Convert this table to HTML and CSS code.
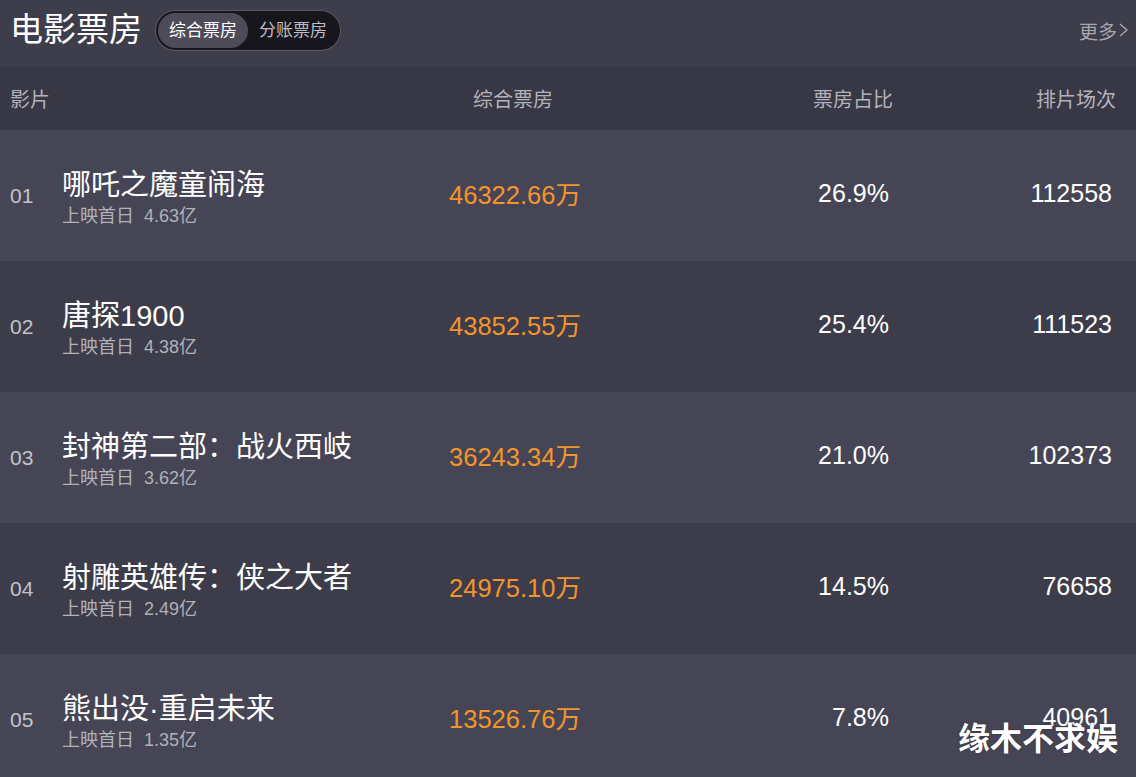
FILE: index.html
```html
<!DOCTYPE html>
<html lang="zh-CN">
<head>
    <meta charset="UTF-8">
    <meta name="viewport" content="width=device-width, initial-scale=1.0">
    <title>电影票房</title>
    <link rel="stylesheet" href="styles.css">
</head>
<body>
    <div class="board">
        <div class="topbar">
            <h1 class="title">电影票房</h1>
            <div class="tabs">
                <span class="tab active">综合票房</span>
                <span class="tab">分账票房</span>
            </div>
            <a class="more" href="#">更多<svg width="11" height="16" viewBox="0 0 11 16"><polyline points="2,2 9,8 2,14" fill="none" stroke="#a9a8b0" stroke-width="1.3"/></svg></a>
        </div>

        <div class="row head">
            <div class="c-film">影片</div>
            <div class="c-box">综合票房</div>
            <div class="c-rate">票房占比</div>
            <div class="c-show">排片场次</div>
        </div>

        <div class="row light">
            <div class="c-film">
                <span class="num">01</span>
                <div class="info">
                    <div class="name">哪吒之魔童闹海</div>
                    <div class="first">上映首日&nbsp;&nbsp;4.63亿</div>
                </div>
            </div>
            <div class="c-box money">46322.66万</div>
            <div class="c-rate val">26.9%</div>
            <div class="c-show val">112558</div>
        </div>

        <div class="row dark">
            <div class="c-film">
                <span class="num">02</span>
                <div class="info">
                    <div class="name">唐探1900</div>
                    <div class="first">上映首日&nbsp;&nbsp;4.38亿</div>
                </div>
            </div>
            <div class="c-box money">43852.55万</div>
            <div class="c-rate val">25.4%</div>
            <div class="c-show val">111523</div>
        </div>

        <div class="row light">
            <div class="c-film">
                <span class="num">03</span>
                <div class="info">
                    <div class="name">封神第二部：战火西岐</div>
                    <div class="first">上映首日&nbsp;&nbsp;3.62亿</div>
                </div>
            </div>
            <div class="c-box money">36243.34万</div>
            <div class="c-rate val">21.0%</div>
            <div class="c-show val">102373</div>
        </div>

        <div class="row dark">
            <div class="c-film">
                <span class="num">04</span>
                <div class="info">
                    <div class="name">射雕英雄传：侠之大者</div>
                    <div class="first">上映首日&nbsp;&nbsp;2.49亿</div>
                </div>
            </div>
            <div class="c-box money">24975.10万</div>
            <div class="c-rate val">14.5%</div>
            <div class="c-show val">76658</div>
        </div>

        <div class="row light">
            <div class="c-film">
                <span class="num">05</span>
                <div class="info">
                    <div class="name">熊出没·重启未来</div>
                    <div class="first">上映首日&nbsp;&nbsp;1.35亿</div>
                </div>
            </div>
            <div class="c-box money">13526.76万</div>
            <div class="c-rate val">7.8%</div>
            <div class="c-show val">40961</div>
        </div>

        <div class="watermark">缘木不求娱</div>
    </div>
</body>
</html>
```

FILE: styles.css
```css
html, body {
    margin: 0;
    padding: 0;
    background-color: #454453;
}

body {
    font-family: "Liberation Sans", "Noto Sans CJK SC", sans-serif;
    width: 1136px;
    height: 777px;
    overflow: hidden;
}

.board {
    position: relative;
}

.topbar {
    display: flex;
    align-items: center;
    height: 60px;
    padding: 0 7px 7px 10px;
    background-color: #3e3d4c;
}

.title {
    margin: 0;
    font-size: 33px;
    font-weight: normal;
    line-height: 40px;
    color: #ffffff;
}

.tabs {
    display: flex;
    margin-left: 14px;
    padding: 2px;
    border-radius: 20px;
    background-color: #17161c;
    box-shadow: 0 0 0 1px #57566a;
}

.tab {
    padding: 0 11px;
    height: 35px;
    line-height: 35px;
    border-radius: 18px;
    font-size: 17px;
    color: #bdbcc4;
}

.tab.active {
    background-color: #4d4b58;
    color: #ffffff;
}

.more {
    margin-left: auto;
    display: flex;
    align-items: center;
    gap: 1px;
    font-size: 19px;
    color: #a9a8b0;
    text-decoration: none;
}

.row {
    display: grid;
    grid-template-columns: 400px 206px 277px 223px;
    align-items: center;
    height: 131px;
    padding: 0 20px 0 10px;
}

.row.head {
    height: 63px;
    background-color: #383745;
    font-size: 20px;
    color: #b3b2ba;
}

.row.light {
    background-color: #464555;
}

.row.dark {
    background-color: #3d3c4a;
}

.c-film {
    display: flex;
    align-items: center;
}

.c-box {
    text-align: center;
}

.c-rate,
.c-show {
    text-align: right;
}

.val {
    padding-right: 4px;
    padding-bottom: 4px;
    font-size: 25px;
    color: #ffffff;
}

.money {
    font-size: 25.5px;
    color: #f4952c;
    padding-bottom: 6px;
    padding-left: 4px;
}

.num {
    width: 52px;
    font-size: 21px;
    color: #c3c2ca;
}

.info {
    padding-top: 4px;
}

.name {
    font-size: 29px;
    line-height: 36px;
    color: #ffffff;
}

.first {
    font-size: 18px;
    line-height: 26px;
    color: #b2b1b9;
}

.watermark {
    position: absolute;
    right: 18px;
    top: 718px;
    font-size: 32px;
    font-weight: bold;
    line-height: 42px;
    color: #ffffff;
    text-shadow: 0 0 2px #2a2a35;
}
```
